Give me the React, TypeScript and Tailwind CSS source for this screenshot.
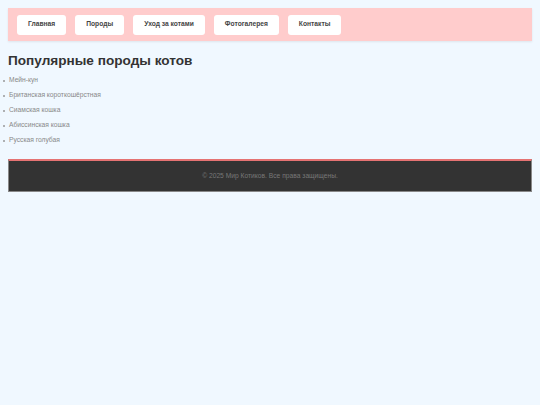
const links = ['Главная', 'Породы', 'Уход за котами', 'Фотогалерея', 'Контакты'];
const breeds = ['Мейн-кун', 'Британская короткошёрстная', 'Сиамская кошка', 'Абиссинская кошка', 'Русская голубая'];

export default function App() {
  return (
    <div className="min-h-[405px] bg-[#f0f8ff] p-2 font-['Liberation_Sans',Arial,sans-serif]">
      <nav className="flex h-[33px] items-center gap-[9px] bg-[#ffcccc] px-[9px] shadow-[0_1px_2px_rgba(0,0,0,0.08)]">
        {links.map(l => (
          <a key={l} className="flex h-[20px] items-center rounded-[3px] bg-white px-[11px] text-[6.7px] font-bold text-[#444]">
            {l}
          </a>
        ))}
      </nav>

      <h2 className="mt-[10px] text-[13.6px] font-bold leading-[19px] text-[#333]">Популярные породы котов</h2>

      <ul className="mt-[3px] text-[6.7px] text-[#888]">
        {breeds.map(b => (
          <li key={b} className="-ml-[5px] flex h-[15px] items-center gap-[4px]">
            <span className="h-[2px] w-[2px] rounded-full bg-[#999]" />
            {b}
          </li>
        ))}
      </ul>

      <footer className="mt-[11px] flex h-[33px] items-center justify-center border-t-2 border-x border-b border-t-[#e57373] border-x-[#888] border-b-[#888] bg-[#333] text-[6.7px] text-[#777]">
        © 2025 Мир Котиков. Все права защищены.
      </footer>
    </div>
  );
}
